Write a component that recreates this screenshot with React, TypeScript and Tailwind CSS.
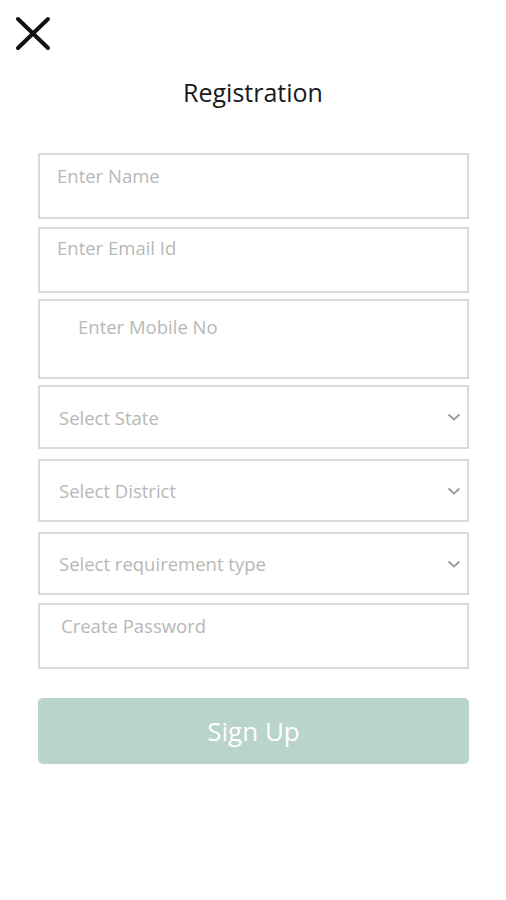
import React from "react";

const font = { fontFamily: '"Open Sans", "Noto Sans", sans-serif' };

const Chevron = () => (
  <svg width="14" height="10" viewBox="0 0 14 10" className="shrink-0">
    <path d="M1.5 2.5 L7 7.5 L12.5 2.5" fill="none" stroke="#9a9a9a" strokeWidth="1.8" />
  </svg>
);

const TextBox = ({ label, h, mt, pl, pt }: { label: string; h: string; mt: string; pl: string; pt: string }) => (
  <div className={`${h} ${mt} ${pl} ${pt} border-2 border-[#dadada] text-[18.5px] text-[#b8b8b8] leading-none`}>
    {label}
  </div>
);

const SelectBox = ({ label, mt, h }: { label: string; mt: string; h: string }) => (
  <div className={`${h} ${mt} pl-[19px] pr-[6px] flex items-center justify-between border-2 border-[#dadada] text-[18.5px] text-[#b8b8b8] leading-none`}>
    <span className="pt-[2px]">{label}</span>
    <Chevron />
  </div>
);

export default function App() {
  return (
    <div className="w-[506px] h-[900px] bg-white" style={font}>
      <div className="pt-[16px] pl-[15px]">
        <svg width="36" height="35" viewBox="0 0 36 35">
          <path d="M3 3 L33 32 M33 3 L3 32" stroke="#111" strokeWidth="4" strokeLinecap="round" />
        </svg>
      </div>
      <h1 className="mt-[29px] text-center text-[25px] text-[#1a1a1a] leading-none">Registration</h1>
      <div className="mt-[48px] mx-[38px] w-[431px] flex flex-col">
        <TextBox label="Enter Name" h="h-[66px]" mt="mt-0" pl="pl-[17px]" pt="pt-[12px]" />
        <TextBox label="Enter Email Id" h="h-[66px]" mt="mt-[8px]" pl="pl-[17px]" pt="pt-[10px]" />
        <TextBox label="Enter Mobile No" h="h-[80px]" mt="mt-[6px]" pl="pl-[38px]" pt="pt-[17px]" />
        <SelectBox label="Select State" mt="mt-[6px]" h="h-[64px]" />
        <SelectBox label="Select District" mt="mt-[10px]" h="h-[63px]" />
        <SelectBox label="Select requirement type" mt="mt-[10px]" h="h-[63px]" />
        <TextBox label="Create Password" h="h-[66px]" mt="mt-[8px]" pl="pl-[21px]" pt="pt-[12px]" />
        <button className="mt-[29px] h-[66px] w-full rounded-[5px] bg-[#b9d4cb] text-white text-[26px] leading-none" style={font}>
          Sign Up
        </button>
      </div>
    </div>
  );
}
